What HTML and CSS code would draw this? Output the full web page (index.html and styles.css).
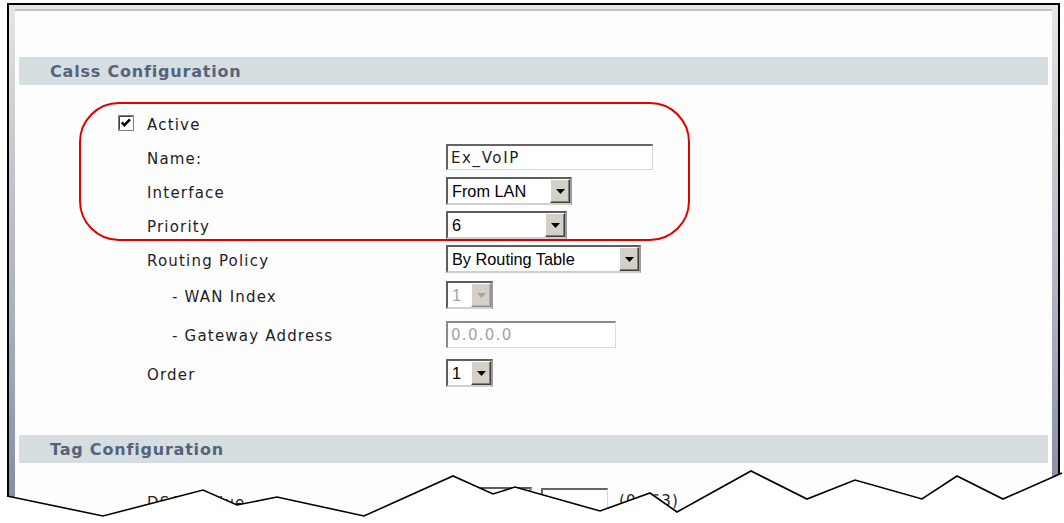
FILE: index.html
```html
<!DOCTYPE html>
<html>
<head>
<meta charset="utf-8">
<title>Class Configuration</title>
<link rel="stylesheet" href="styles.css">
</head>
<body>
<div class="frame">
  <div class="page">
    <div class="bar">Calss Configuration</div>
    <div class="form class-form">
      <div class="row">
        <span class="check"><svg width="16" height="16" viewBox="0 0 16 16"><rect x="0.5" y="0.5" width="15" height="15" fill="#fff" stroke="#808080"/><path d="M1.5 14.5V1.5H14.5" fill="none" stroke="#404040"/><polyline points="3.8,7.4 6.4,10.2 12,4.3" fill="none" stroke="#000" stroke-width="2.4"/></svg></span>
        <span class="label">Active</span>
      </div>
      <div class="row">
        <span></span><span class="label">Name:</span>
        <span class="textbox name-box">Ex_VoIP</span>
      </div>
      <div class="row">
        <span></span><span class="label">Interface</span>
        <span class="select sel-iface"><span class="val">From LAN</span><span class="btn"><svg width="9" height="5" viewBox="0 0 9 5"><polygon points="0,0 9,0 4.5,5" fill="#000"/></svg></span></span>
      </div>
      <div class="row">
        <span></span><span class="label">Priority</span>
        <span class="select sel-prio"><span class="val">6</span><span class="btn"><svg width="9" height="5" viewBox="0 0 9 5"><polygon points="0,0 9,0 4.5,5" fill="#000"/></svg></span></span>
      </div>
      <div class="row">
        <span></span><span class="label">Routing Policy</span>
        <span class="select sel-route"><span class="val">By Routing Table</span><span class="btn"><svg width="9" height="5" viewBox="0 0 9 5"><polygon points="0,0 9,0 4.5,5" fill="#000"/></svg></span></span>
      </div>
      <div class="row row-38">
        <span></span><span class="label sub">- WAN Index</span>
        <span class="select sel-small disabled"><span class="val">1</span><span class="btn"><svg width="9" height="5" viewBox="0 0 9 5"><polygon points="0,0 9,0 4.5,5" fill="#a6a6a6"/></svg></span></span>
      </div>
      <div class="row row-40">
        <span></span><span class="label sub">- Gateway Address</span>
        <span class="textbox gw-box disabled">0.0.0.0</span>
      </div>
      <div class="row row-38">
        <span></span><span class="label">Order</span>
        <span class="select sel-small"><span class="val">1</span><span class="btn"><svg width="9" height="5" viewBox="0 0 9 5"><polygon points="0,0 9,0 4.5,5" fill="#000"/></svg></span></span>
      </div>
    </div>
    <div class="bar tag-bar">Tag Configuration</div>
    <div class="form tag-form">
      <div class="row row-38">
        <span></span><span class="label">DSCP Value</span>
        <span class="dscp">
          <span class="select sel-dscp"><span class="val">46</span><span class="btn"><svg width="9" height="5" viewBox="0 0 9 5"><polygon points="0,0 9,0 4.5,5" fill="#000"/></svg></span></span>
          <span class="textbox dscp-box"></span>
          <span class="hint">(0~63)</span>
        </span>
      </div>
    </div>
  </div>
</div>

<div class="callout"></div>

<svg class="tear" width="1064" height="523" viewBox="0 0 1064 523">
  <polygon fill="#fff" points="0,496 7,496 103,516 203,490 237,505 277,497 364,516 453,476 493,494 515,487 600,511 650,493 677,512 751,471 807,499 855,480 922,499 957,476 1003,499 1062,473 1064,472 1064,523 0,523"/>
  <polyline fill="none" stroke="#000" stroke-width="1.6" stroke-linejoin="miter" points="7,496 103,516 203,490 237,505 277,497 364,516 453,476 493,494 515,487 600,511 650,493 677,512 751,471 807,499 855,480 922,499 957,476 1003,499 1062,473"/>
</svg>
</body>
</html>
```

FILE: styles.css
```css
* {
  box-sizing: border-box;
}

html,
body {
  margin: 0;
  padding: 0;
  width: 1064px;
  height: 523px;
  overflow: hidden;
  background: #fff;
}

body {
  position: relative;
  font-family: "DejaVu Sans", Verdana, sans-serif;
  color: #1e1e1e;
}

.frame {
  margin: 3px 0 0 7px;
  width: 1053px;
  height: 540px;
  border: 2px solid #000;
  border-bottom: 0;
  padding: 4px 6px 0 6px;
  background: linear-gradient(to bottom, #e6e6e6 0%, #cfcfd2 20%, #a9aebd 60%, #7c839e 100%);
}

.page {
  height: 100%;
  background: #fdfdfd;
  border-top: 2px solid #c2c2c6;
  padding: 0 4px;
}

.bar {
  margin-top: 46px;
  height: 28px;
  background: #d7dee1;
  color: #56647a;
  font-weight: bold;
  font-size: 16px;
  letter-spacing: 0.8px;
  padding-left: 31px;
  display: flex;
  align-items: center;
}

.tag-bar {
  margin-top: 43px;
}

.form {
  padding-left: 99px;
}

.class-form {
  margin-top: 21px;
}

.tag-form {
  margin-top: 19px;
}

.row {
  display: grid;
  grid-template-columns: 29px 299px 1fr;
  align-items: center;
  height: 34px;
}

.row > * {
  justify-self: start;
}

.row-38 {
  height: 38px;
}

.row-40 {
  height: 40px;
}

.check {
  display: flex;
  width: 16px;
  height: 16px;
}

.label {
  font-size: 15px;
  letter-spacing: 1.2px;
  color: #1e1e1e;
  padding-top: 3px;
  white-space: nowrap;
}

.label.sub {
  padding-left: 25px;
}

.textbox {
  display: flex;
  align-items: center;
  height: 26px;
  background: #fff;
  border-style: solid;
  border-width: 2px 1px 1px 2px;
  border-color: #646464 #d6d6d6 #d6d6d6 #646464;
  font-size: 15px;
  letter-spacing: 1.6px;
  padding-left: 3px;
  white-space: nowrap;
}

.name-box {
  width: 207px;
}

.gw-box {
  width: 170px;
  height: 27px;
  letter-spacing: 1.3px;
}

.textbox.disabled {
  color: #a3a3a3;
  border-color: #8a8a8a #dadada #dadada #8a8a8a;
}

.select {
  display: flex;
  height: 28px;
  background: #fff;
  border-style: solid;
  border-width: 2px;
  border-color: #5e5e5e #9c9c9c #d0d0d0 #5e5e5e;
  font-family: "Liberation Sans", Arial, sans-serif;
  font-size: 16.3px;
  color: #000;
  white-space: nowrap;
}

.select .val {
  flex: 1;
  display: flex;
  align-items: center;
  padding-left: 4px;
}

.select .btn {
  width: 20px;
  display: flex;
  align-items: center;
  justify-content: center;
  background: #d4d0c8;
  border: 1px solid;
  border-color: #fff #404040 #404040 #fff;
  box-shadow: inset -1px -1px 0 #808080;
  padding-top: 1px;
}

.select.disabled .val {
  color: #a3a3a3;
}

.select.disabled .btn {
  border-color: #fff #8c8c8c #8c8c8c #fff;
  box-shadow: inset -1px -1px 0 #b4b4b4;
}

.sel-iface {
  width: 126px;
}

.sel-prio {
  width: 121px;
}

.sel-route {
  width: 195px;
}

.sel-small {
  width: 47px;
}

.dscp {
  display: flex;
  align-items: center;
  gap: 9px;
}

.sel-dscp {
  width: 86px;
}

.dscp-box {
  width: 67px;
  height: 27px;
}

.hint {
  font-size: 15px;
  letter-spacing: 1.2px;
  padding-left: 2px;
}

.callout {
  position: absolute;
  left: 79px;
  top: 102px;
  width: 611px;
  height: 139px;
  border: 2px solid #e00000;
  border-radius: 40px;
}

.tear {
  position: absolute;
  left: 0;
  top: 0;
}
```
